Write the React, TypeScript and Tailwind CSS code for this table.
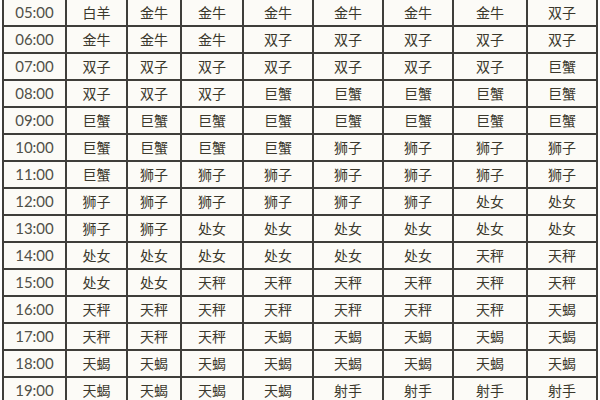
import React from 'react';

const rows: [string, string[]][] = [
  ['05:00', ['白羊', '金牛', '金牛', '金牛', '金牛', '金牛', '金牛', '双子']],
  ['06:00', ['金牛', '金牛', '金牛', '双子', '双子', '双子', '双子', '双子']],
  ['07:00', ['双子', '双子', '双子', '双子', '双子', '双子', '双子', '巨蟹']],
  ['08:00', ['双子', '双子', '双子', '巨蟹', '巨蟹', '巨蟹', '巨蟹', '巨蟹']],
  ['09:00', ['巨蟹', '巨蟹', '巨蟹', '巨蟹', '巨蟹', '巨蟹', '巨蟹', '巨蟹']],
  ['10:00', ['巨蟹', '巨蟹', '巨蟹', '巨蟹', '狮子', '狮子', '狮子', '狮子']],
  ['11:00', ['巨蟹', '狮子', '狮子', '狮子', '狮子', '狮子', '狮子', '狮子']],
  ['12:00', ['狮子', '狮子', '狮子', '狮子', '狮子', '狮子', '处女', '处女']],
  ['13:00', ['狮子', '狮子', '处女', '处女', '处女', '处女', '处女', '处女']],
  ['14:00', ['处女', '处女', '处女', '处女', '处女', '处女', '天秤', '天秤']],
  ['15:00', ['处女', '处女', '天秤', '天秤', '天秤', '天秤', '天秤', '天秤']],
  ['16:00', ['天秤', '天秤', '天秤', '天秤', '天秤', '天秤', '天秤', '天蝎']],
  ['17:00', ['天秤', '天秤', '天秤', '天蝎', '天蝎', '天蝎', '天蝎', '天蝎']],
  ['18:00', ['天蝎', '天蝎', '天蝎', '天蝎', '天蝎', '天蝎', '天蝎', '天蝎']],
  ['19:00', ['天蝎', '天蝎', '天蝎', '天蝎', '射手', '射手', '射手', '射手']],
];

export default function App() {
  return (
    <div className="w-[600px] h-[400px] overflow-hidden bg-white">
      <div className="ml-[2px] -mt-[2px] w-[596px] grid grid-cols-[61px_59px_52px_60px_68px_68px_68px_72px_68px] auto-rows-[25px] gap-[2px] p-[2px] bg-[#3f3e3a]">
        {rows.map(([time, signs]) => (
          <React.Fragment key={time}>
            <div className="bg-[#fcfbf7] flex items-center justify-center text-[15px] text-[#505048] font-['Lato','Liberation_Sans',sans-serif]">
              {time}
            </div>
            {signs.map((s, i) => (
              <div
                key={i}
                className="bg-[#fcfbf7] flex items-center justify-center text-[14px] text-[#3b382c] font-['Noto_Sans_CJK_SC',sans-serif]"
              >
                {s}
              </div>
            ))}
          </React.Fragment>
        ))}
      </div>
    </div>
  );
}
